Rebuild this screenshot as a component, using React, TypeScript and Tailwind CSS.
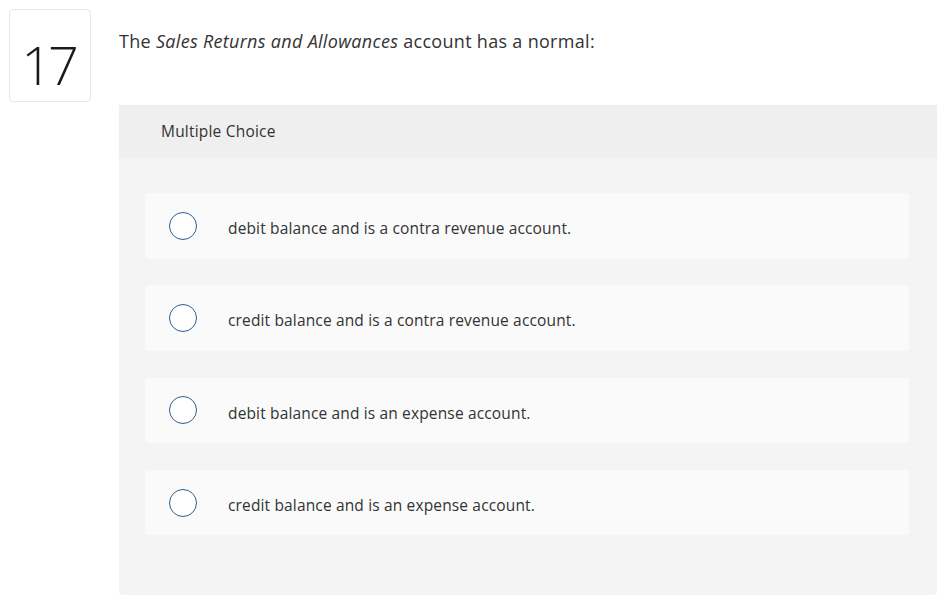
import React from 'react';

const options = [
  'debit balance and is a contra revenue account.',
  'credit balance and is a contra revenue account.',
  'debit balance and is an expense account.',
  'credit balance and is an expense account.',
];

export default function App() {
  return (
    <div className="w-[948px] h-[604px] bg-white text-[#333] flex items-start" style={{ fontFamily: '"Open Sans", Lato, sans-serif' }}>
      <div className="ml-[9px] mt-[9px] w-[82px] h-[93px] border border-[#e6e6e6] rounded-[4px] flex items-center justify-center shrink-0">
        <span className="text-[54px] leading-none font-[350] tracking-[-4px] text-[#1a1a1a] pt-[17px] pr-[4px]">17</span>
      </div>
      <div className="ml-[28px] w-[818px] flex flex-col">
        <p className="mt-[29px] text-[18px] leading-[24px] tracking-[0.3px] text-[#333]">
          The <i>Sales Returns and Allowances</i> account has a normal:
        </p>
        <div className="mt-[52px] h-[490px] rounded-b-[4px] bg-[#f4f4f4] flex flex-col">
          <div className="h-[53px] bg-[#efefef] flex items-center pl-[42px] text-[15.5px] tracking-[0.2px] text-[#333]">Multiple Choice</div>
          <div className="pt-[35px] pl-[26px] pr-[28px] flex flex-col gap-[26.8px]">
            {options.map((o, i) => (
              <div key={i} className="h-[65.5px] bg-[#fafafa] rounded-[3px] flex items-center">
                <span className="ml-[24px] w-[28px] h-[28px] rounded-full border-[1.5px] border-[#2f5f8e] bg-white shrink-0" />
                <span className="ml-[31px] pt-[6px] text-[15.5px] tracking-[0.15px] text-[#333]">{o}</span>
              </div>
            ))}
          </div>
        </div>
      </div>
    </div>
  );
}
